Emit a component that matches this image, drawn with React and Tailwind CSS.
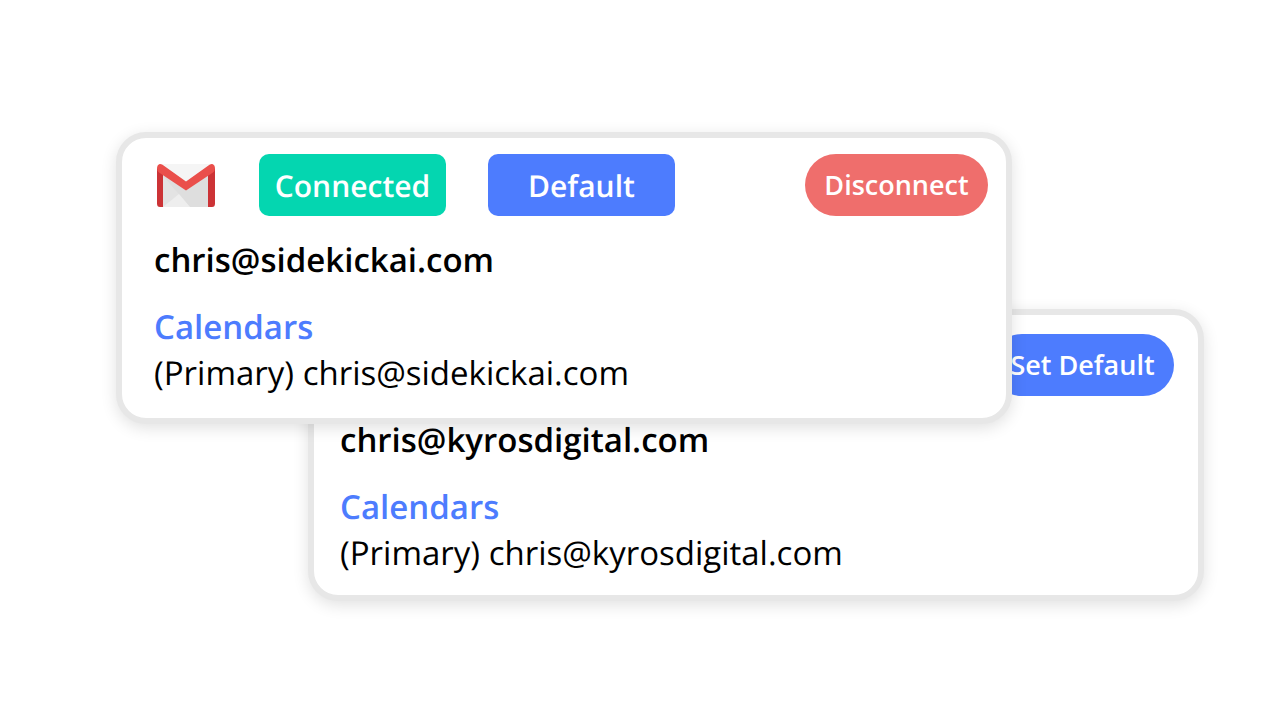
function GmailIcon() {
  return (
    <svg viewBox="0 1 63 50" className="h-[50px] w-[63px] shrink-0" role="img" aria-label="Gmail">
      <path d="M7 5H57L60 8V48H4V8Z" fill="#f5f5f5" />
      <path d="M9 14L32 30L55 14V48H9Z" fill="#dedede" />
      <path d="M9 17L36 48H9Z" fill="#e3e3e3" />
      <path d="M9 48L25 35L36 48Z" fill="#eeeeee" />
      <path d="M3 9L9 13V48H6Q3 48 3 44.500Z" fill="#cc3336" />
      <path d="M61 9L54 13V48H58Q61 48 61 44.500Z" fill="#cc3336" />
      <path
        d="M3 9Q3 6.500 5 5.200Q6.500 4.500 8.500 5.800L32 22.500L55.500 5.800Q57.500 4.500 59 5.200Q61 6.500 61 9Q61 12 59 13.500L32 31.500L5 13.500Q3 12 3 9Z"
        fill="#ea4f4b"
      />
    </svg>
  )
}

function Badge({ children, className }) {
  return (
    <span
      className={`flex h-[62px] w-[187px] shrink-0 items-center justify-center rounded-[10px] text-[30px] font-semibold text-white ${className}`}
    >
      {children}
    </span>
  )
}

function PillButton({ children, className }) {
  return (
    <button
      type="button"
      className={`ml-auto h-[62px] w-[183px] shrink-0 rounded-full text-[27px] font-semibold whitespace-nowrap text-white ${className}`}
    >
      {children}
    </button>
  )
}

function AccountCard({ email, children, className }) {
  return (
    <section
      className={`rounded-[30px] border-6 border-[#e7e7e7] bg-white shadow-[0_4px_16px_rgba(0,0,0,0.12)] ${className}`}
    >
      <div className="flex items-center gap-[42px]">{children}</div>
      <h2 className="mt-[21px] text-[33px] leading-[46px] font-semibold">{email}</h2>
      <h3 className="mt-[21px] text-[33px] leading-[46px] font-semibold text-[#4d7cfe]">Calendars</h3>
      <p className="text-[33px] leading-[46px]">(Primary) {email}</p>
    </section>
  )
}

export default function App() {
  return (
    <main className="min-h-screen bg-white pt-[132px] pr-19 pb-10 pl-29 font-['Open_Sans',sans-serif] text-black [text-rendering:geometricPrecision]">
      <AccountCard email="chris@sidekickai.com" className="relative z-10 mr-48 pt-4 pr-[18px] pb-[22px] pl-8">
        <GmailIcon />
        <Badge className="bg-[#04d6b0]">Connected</Badge>
        <Badge className="bg-[#4d7cfe]">Default</Badge>
        <PillButton className="bg-[#ef6e6c]">Disconnect</PillButton>
      </AccountCard>

      {/* Second account sits behind the first one */}
      <AccountCard email="chris@kyrosdigital.com" className="mt-[-115px] ml-48 pt-[19px] pr-6 pb-[19px] pl-[26px]">
        <PillButton className="bg-[#4d7cfe]">Set Default</PillButton>
      </AccountCard>
    </main>
  )
}
